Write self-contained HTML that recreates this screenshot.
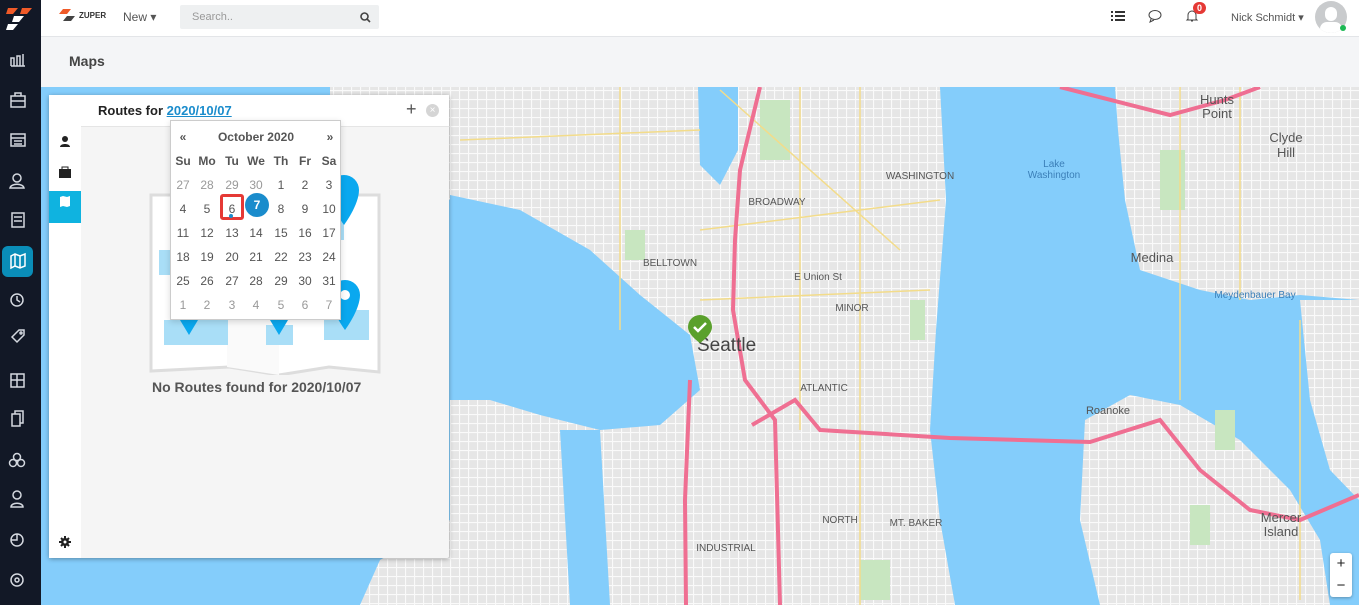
<!DOCTYPE html>
<html><head><meta charset="utf-8"><style>
*{margin:0;padding:0;box-sizing:border-box}
body{width:1359px;height:605px;overflow:hidden;font-family:"Liberation Sans",sans-serif;background:#f4f5f7;position:relative}
.sb{position:absolute;left:0;top:0;width:41px;height:605px;background:#121826}
.top{position:absolute;left:41px;top:0;right:0;height:37px;background:#fff;border-bottom:1px solid #e3e5e8}
.title{position:absolute;left:41px;top:38px;right:0;height:49px;background:#f4f5f7}
.map{position:absolute;left:41px;top:87px;width:1318px;height:518px;overflow:hidden}
.panel{position:absolute;left:49px;top:95px;width:400px;height:463px;background:#f5f5f5;box-shadow:0 1px 5px rgba(0,0,0,.35);border-radius:2px}
.cal{position:absolute;left:170px;top:120px;width:171px;height:200px;background:#fff;border:1px solid #ccc;box-shadow:0 2px 6px rgba(0,0,0,.15);font-size:12px;color:#555}
.cal div{position:absolute;width:24px;text-align:center}
</style></head><body>
<div class="sb">
<svg width="41" height="605" style="position:absolute;left:0;top:0" fill="none" stroke="#d4d8df" stroke-width="1.5">
<polygon points="8,8 18,8 13,14 6,14" fill="#f05a28" stroke="none"/><polygon points="22,8 32,8 27,14 20,14" fill="#f05a28" stroke="none"/>
<polygon points="14,16 24,16 19,22 12,22" fill="#fff" stroke="none"/><polygon points="8,24 18,24 13,30 6,30" fill="#fff" stroke="none"/>
<path d="M11 66v-8h3v8h3v-10h3v10h3v-12M11 66h14"/>
<rect x="11" y="96" width="14" height="11"/><path d="M15 96v-3h6v3M11 101h14"/>
<rect x="11" y="134" width="14" height="12"/><path d="M11 138h14M14 141h8M14 144h8"/>
<circle cx="17" cy="178" r="4"/><path d="M10 188c1-5 13-5 14 0z"/>
<rect x="12" y="213" width="12" height="14"/><path d="M14 217h8M14 221h8"/>
<rect x="2" y="246" width="31" height="31" rx="6" fill="#0a8db8" stroke="none"/>
<path d="M11 256l4-2 5 2 5-2v12l-5 2-5-2-4 2z M15 254v12M20 256v12" stroke="#fff"/>
<circle cx="17" cy="300" r="6"/><path d="M17 296v4l3 2"/>
<path d="M12 337l7-7h5v5l-7 7z"/><circle cx="21" cy="333" r="1"/>
<rect x="11" y="374" width="13" height="13"/><path d="M11 380h13M17 374v13"/>
<path d="M12 414h8v12h-8zM15 414v-3h8v12h-3"/>
<circle cx="13" cy="463" r="3.5"/><circle cx="21" cy="463" r="3.5"/><circle cx="17" cy="457" r="3.5"/>
<circle cx="17" cy="495" r="4"/><path d="M11 507c0-5 12-5 12 0z"/>
<circle cx="17" cy="540" r="6"/><path d="M17 534v6h-6"/>
<circle cx="17" cy="580" r="6"/><circle cx="17" cy="580" r="2"/>
</svg>
</div>
<div class="top">
<svg style="position:absolute;left:18px;top:9px" width="20" height="14"><polygon points="4,0 12,0 8,5 0,5" fill="#f05a28"/><polygon points="8,7 16,7 12,12 4,12" fill="#444"/></svg>
<span style="position:absolute;left:38px;top:11px;font-size:8px;font-weight:bold;color:#333">ZUPER</span>
<span style="position:absolute;left:82px;top:10px;font-size:12px;color:#555">New ▾</span>
<div style="position:absolute;left:139px;top:5px;width:199px;height:24px;background:#eef0f1;border-radius:2px"><span style="position:absolute;left:12px;top:6px;font-size:11px;color:#999">Search..</span>
<svg style="position:absolute;left:180px;top:7px" width="11" height="11" fill="none" stroke="#444" stroke-width="1.6"><circle cx="4.5" cy="4.5" r="3.5"/><path d="M7 7l3 3"/></svg></div>
<svg style="position:absolute;left:1070px;top:10px" width="14" height="12" fill="#333"><rect x="0" y="1" width="2" height="2"/><rect x="4" y="1" width="10" height="2"/><rect x="0" y="5" width="2" height="2"/><rect x="4" y="5" width="10" height="2"/><rect x="0" y="9" width="2" height="2"/><rect x="4" y="9" width="10" height="2"/></svg>
<svg style="position:absolute;left:1107px;top:9px" width="14" height="14" fill="none" stroke="#444"><ellipse cx="7" cy="6" rx="6" ry="4.5"/><path d="M3 10l-1 3 4-2"/></svg>
<svg style="position:absolute;left:1144px;top:8px" width="14" height="15" fill="none" stroke="#444"><path d="M3 11V7a4 4 0 0 1 8 0v4l1 1H2zM6 13h2"/></svg>
<div style="position:absolute;left:1152px;top:2px;width:13px;height:12px;border-radius:6px;background:#e53935;color:#fff;font-size:9px;font-weight:bold;text-align:center;line-height:12px">0</div>
<span style="position:absolute;left:1190px;top:11px;font-size:11px;color:#555">Nick Schmidt ▾</span>
<div style="position:absolute;left:1274px;top:1px;width:32px;height:32px;border-radius:50%;background:#c9cbcd;overflow:hidden"><div style="position:absolute;left:10px;top:6px;width:12px;height:14px;border-radius:6px;background:#fff"></div><div style="position:absolute;left:5px;top:21px;width:22px;height:14px;border-radius:10px;background:#fff"></div></div>
<div style="position:absolute;left:1299px;top:25px;width:6px;height:6px;border-radius:50%;background:#1db954"></div>
</div>
<div class="title"><span style="position:absolute;left:28px;top:15px;font-size:14px;font-weight:bold;color:#444">Maps</span></div>
<div class="map">
<svg width="1318" height="518" viewBox="41 87 1318 518" style="font-family:'Liberation Sans',sans-serif">
<defs><pattern id="g" width="9" height="9" patternUnits="userSpaceOnUse"><rect width="9" height="9" fill="#e6e6e6"/><path d="M0 0.5h9M0.5 0v9" stroke="#fafafa" stroke-width="1.2"/></pattern></defs>
<rect x="41" y="87" width="1318" height="518" fill="#84cdfb"/>
<g fill="url(#g)">
<polygon points="450,87 940,87 946,200 936,330 930,430 940,520 955,605 450,605"/>
<polygon points="330,87 450,87 450,200 400,170 330,140"/>
<polygon points="380,560 450,520 450,605 360,605"/>
<polygon points="1115,87 1359,87 1359,300 1300,295 1250,300 1200,290 1140,270 1125,200 1118,130"/>
<polygon points="1300,300 1359,300 1359,500 1330,470 1310,400"/>
<polygon points="1085,420 1130,395 1180,405 1240,440 1290,490 1320,540 1330,605 1100,605 1080,520"/>
</g>
<polygon points="450,195 520,210 590,250 640,295 690,335 700,390 660,425 600,430 540,415 490,400 450,400" fill="#84cdfb"/>
<polygon points="560,430 600,430 610,605 570,605" fill="#84cdfb"/>
<polygon points="698,87 738,87 738,150 720,185 700,165" fill="#84cdfb"/>
<g fill="#c8e6c0"><rect x="760" y="100" width="30" height="60"/><rect x="1160" y="150" width="25" height="60"/><rect x="1190" y="505" width="20" height="40"/><rect x="860" y="560" width="30" height="40"/><rect x="625" y="230" width="20" height="30"/><rect x="910" y="300" width="15" height="40"/><rect x="1215" y="410" width="20" height="40"/></g>
<g fill="none" stroke="#f3dc8a" stroke-width="1.5"><path d="M620 87V330M800 87V430M860 87V605M700 230L940 200M700 300L930 290M720 90L900 250M460 140L700 130M1180 87V400M1240 87V300M1300 320V600"/></g>
<g fill="none" stroke="#ef6f92" stroke-width="4">
<path d="M760 87L740 170L735 240L733 310L745 380L775 420L780 605"/>
<path d="M752 425L795 400L820 430L950 438L1090 442L1160 420L1200 470L1250 510L1300 520L1359 495"/>
<path d="M1060 87L1170 115L1225 100L1260 87"/>
<path d="M690 380L685 500L686 605"/>
</g>
<g fill="#555" font-size="10" text-anchor="middle">
<text x="1054" y="167" fill="#3b7fb8">Lake</text><text x="1054" y="178" fill="#3b7fb8">Washington</text>
<text x="1152" y="262" font-size="13">Medina</text>
<text x="1281" y="522" font-size="13">Mercer</text><text x="1281" y="536" font-size="13">Island</text>
<text x="1286" y="142" font-size="13">Clyde</text><text x="1286" y="157" font-size="13">Hill</text>
<text x="1217" y="104" font-size="13">Hunts</text><text x="1217" y="118" font-size="13">Point</text>
<text x="1255" y="298" fill="#3b7fb8">Meydenbauer Bay</text>
<text x="670" y="266">BELLTOWN</text><text x="818" y="280">E Union St</text>
<text x="777" y="205">BROADWAY</text><text x="852" y="311">MINOR</text>
<text x="1108" y="414" font-size="11">Roanoke</text><text x="824" y="391">ATLANTIC</text>
<text x="916" y="526">MT. BAKER</text><text x="920" y="179">WASHINGTON</text>
<text x="840" y="523">NORTH</text><text x="726" y="551">INDUSTRIAL</text>
</g>
<text x="697" y="351" font-size="19" fill="#444">Seattle</text>
<path d="M700 315a12 12 0 0 1 12 12c0 8-12 16-12 16s-12-8-12-16a12 12 0 0 1 12-12z" fill="#5aa02c"/>
<path d="M694 327l4 4 8-8" stroke="#fff" stroke-width="2.5" fill="none"/>
</svg>
<div style="position:absolute;left:1289px;top:466px;width:22px;height:44px;background:#fff;border-radius:3px;box-shadow:0 1px 3px rgba(0,0,0,.3);font-size:15px;text-align:center;line-height:22px;color:#222">+<br>−</div>
</div>
<div class="panel">
<div style="position:absolute;left:0;top:0;width:32px;height:463px;background:#fff"></div>
<div style="position:absolute;left:32px;top:0;width:368px;height:32px;background:#fff;border-bottom:1px solid #e5e5e5"></div>
<div style="position:absolute;left:0;top:96px;width:32px;height:32px;background:#0fb3e0"></div>
<svg style="position:absolute;left:0;top:0" width="32" height="463" fill="#222"><circle cx="16" cy="44" r="3"/><path d="M11 52c0-4 10-4 10 0z"/><rect x="10" y="74" width="12" height="9"/><path d="M13 74v-2h6v2" stroke="#222" fill="none"/><path d="M11 102l3-1 4 1 3-1v10l-3 1-4-1-3 1z" fill="#fff"/><path d="M16 441v12M10 447h12M12 443l8 8M20 443l-8 8" stroke="#222" stroke-width="2"/><circle cx="16" cy="447" r="4"/><circle cx="16" cy="447" r="1.5" fill="#fff"/></svg>
<span style="position:absolute;left:49px;top:8px;font-size:13px;font-weight:bold;color:#222">Routes for <span style="color:#1a8ccc;text-decoration:underline">2020/10/07</span></span>
<span style="position:absolute;left:357px;top:4px;font-size:18px;color:#555">+</span>
<div style="position:absolute;left:377px;top:9px;width:13px;height:13px;border-radius:50%;background:#d5d5d5;color:#fff;font-size:10px;text-align:center;line-height:13px">×</div>
<svg style="position:absolute;left:100px;top:60px" width="235" height="220">
<polygon points="2,40 230,40 230,217 180,212 130,220 80,212 2,216" fill="#fff" stroke="#ddd" stroke-width="3"/>
<polygon points="78,40 130,40 130,220 78,212" fill="#fafafa"/>
<rect x="15" y="165" width="64" height="25" fill="#a9def7"/><rect x="117" y="170" width="27" height="20" fill="#a9def7"/><rect x="175" y="155" width="45" height="30" fill="#a9def7"/><rect x="10" y="95" width="25" height="25" fill="#a9def7"/><rect x="175" y="60" width="20" height="25" fill="#a9def7"/>
<path d="M195 20a15 15 0 0 1 15 15c0 15-15 35-15 35s-15-20-15-35a15 15 0 0 1 15-15z" fill="#0aa8ef"/>
<path d="M196 125a15 15 0 0 1 15 15c0 15-15 35-15 35s-15-20-15-35a15 15 0 0 1 15-15z" fill="#0aa8ef"/><circle cx="196" cy="140" r="5" fill="#fff"/>
<path d="M28 160h24l-12 20z" fill="#0aa8ef"/><path d="M118 160h24l-12 20z" fill="#0aa8ef"/>
</svg>
<span style="position:absolute;left:103px;top:284px;font-size:14px;font-weight:bold;color:#555">No Routes found for 2020/10/07</span>
</div>
<div class="cal">
<div style="left:0;top:9px;font-weight:bold">«</div><div style="left:25px;top:9px;width:120px;font-weight:bold">October 2020</div><div style="left:147px;top:9px;font-weight:bold">»</div>
<div style="left:0;top:33px;font-weight:bold">Su</div><div style="left:24px;top:33px;font-weight:bold">Mo</div><div style="left:49px;top:33px;font-weight:bold">Tu</div><div style="left:73px;top:33px;font-weight:bold">We</div><div style="left:98px;top:33px;font-weight:bold">Th</div><div style="left:122px;top:33px;font-weight:bold">Fr</div><div style="left:146px;top:33px;font-weight:bold">Sa</div>
<div style="left:0;top:57px;color:#999">27</div><div style="left:24px;top:57px;color:#999">28</div><div style="left:49px;top:57px;color:#999">29</div><div style="left:73px;top:57px;color:#999">30</div><div style="left:98px;top:57px">1</div><div style="left:122px;top:57px">2</div><div style="left:146px;top:57px">3</div>
<div style="left:0;top:81px">4</div><div style="left:24px;top:81px">5</div><div style="left:49px;top:73px;height:26px;width:24px;border:3px solid #e53935;border-radius:3px;padding-top:5px">6</div><div style="left:58px;top:93px;width:4px;height:4px;border-radius:2px;background:#1a8ccc"></div><div style="left:74px;top:72px;width:24px;height:24px;border-radius:50%;background:#1a8ccc;color:#fff;font-weight:bold;line-height:24px">7</div><div style="left:98px;top:81px">8</div><div style="left:122px;top:81px">9</div><div style="left:146px;top:81px">10</div>
<div style="left:0;top:105px">11</div><div style="left:24px;top:105px">12</div><div style="left:49px;top:105px">13</div><div style="left:73px;top:105px">14</div><div style="left:98px;top:105px">15</div><div style="left:122px;top:105px">16</div><div style="left:146px;top:105px">17</div>
<div style="left:0;top:129px">18</div><div style="left:24px;top:129px">19</div><div style="left:49px;top:129px">20</div><div style="left:73px;top:129px">21</div><div style="left:98px;top:129px">22</div><div style="left:122px;top:129px">23</div><div style="left:146px;top:129px">24</div>
<div style="left:0;top:153px">25</div><div style="left:24px;top:153px">26</div><div style="left:49px;top:153px">27</div><div style="left:73px;top:153px">28</div><div style="left:98px;top:153px">29</div><div style="left:122px;top:153px">30</div><div style="left:146px;top:153px">31</div>
<div style="left:0;top:177px;color:#999">1</div><div style="left:24px;top:177px;color:#999">2</div><div style="left:49px;top:177px;color:#999">3</div><div style="left:73px;top:177px;color:#999">4</div><div style="left:98px;top:177px;color:#999">5</div><div style="left:122px;top:177px;color:#999">6</div><div style="left:146px;top:177px;color:#999">7</div>
</div>
</body></html>
